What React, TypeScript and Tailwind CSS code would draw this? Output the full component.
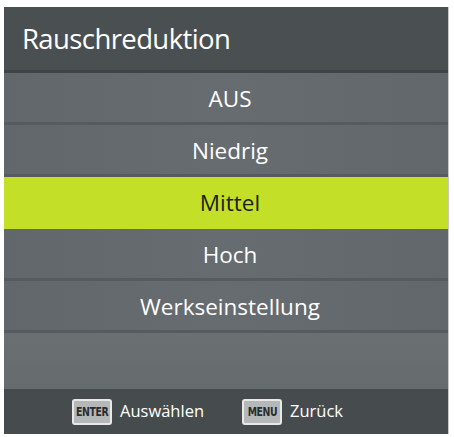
import React from "react";

const font = { fontFamily: '"Open Sans", "Noto Sans", sans-serif' };

function KeyIcon({ label }: { label: string }) {
  return (
    <div className="flex h-[26px] w-[40px] items-center justify-center rounded-[3px] border-2 border-[#e8e8e8] bg-[#b4b8b8]">
      <span
        className="text-[13px] font-bold leading-none tracking-[-0.5px] text-[#2a2d2e]"
        style={{ fontFamily: '"DejaVu Sans Condensed", "Liberation Sans", sans-serif', transform: "scaleX(0.8)" }}
      >
        {label}
      </span>
    </div>
  );
}

function Row({ label, active }: { label: string; active?: boolean }) {
  return (
    <div
      className={
        active
          ? "flex h-[52px] items-center justify-center bg-[#c3df27] pl-[8px] text-[22.5px] text-[#1c1f14]"
          : "flex h-[52px] items-center justify-center border-b-[3px] border-[#555b5e] bg-gradient-to-r from-[#61676b] via-[#666c70] to-[#61676b] pl-[8px] pt-[2px] text-[22.5px] text-white"
      }
    >
      {label}
    </div>
  );
}

export default function App() {
  return (
    <div className="h-[437px] w-[454px] bg-white pl-[4px] pt-[7px]" style={font}>
      <div className="flex w-[445px] flex-col border-r border-[#c8c8c8]">
        <div className="flex h-[63px] items-center bg-[#4a5052] pl-[18px] text-[27.5px] tracking-[-0.6px] text-white">
          Rauschreduktion
        </div>
        <div className="h-[3px] bg-[#3f4547]" />
        <Row label="AUS" />
        <Row label="Niedrig" />
        <Row label="Mittel" active />
        <Row label="Hoch" />
        <Row label="Werkseinstellung" />
        <div className="h-[56px] bg-gradient-to-b from-[#6a7072] to-[#666c6e]" />
        <div className="flex h-[45px] items-center bg-[#464c4e] pl-[68px] text-[16.5px] text-white">
          <KeyIcon label="ENTER" />
          <span className="ml-[8px]">Auswählen</span>
          <div className="ml-[38px]">
            <KeyIcon label="MENU" />
          </div>
          <span className="ml-[8px]">Zurück</span>
        </div>
      </div>
    </div>
  );
}
